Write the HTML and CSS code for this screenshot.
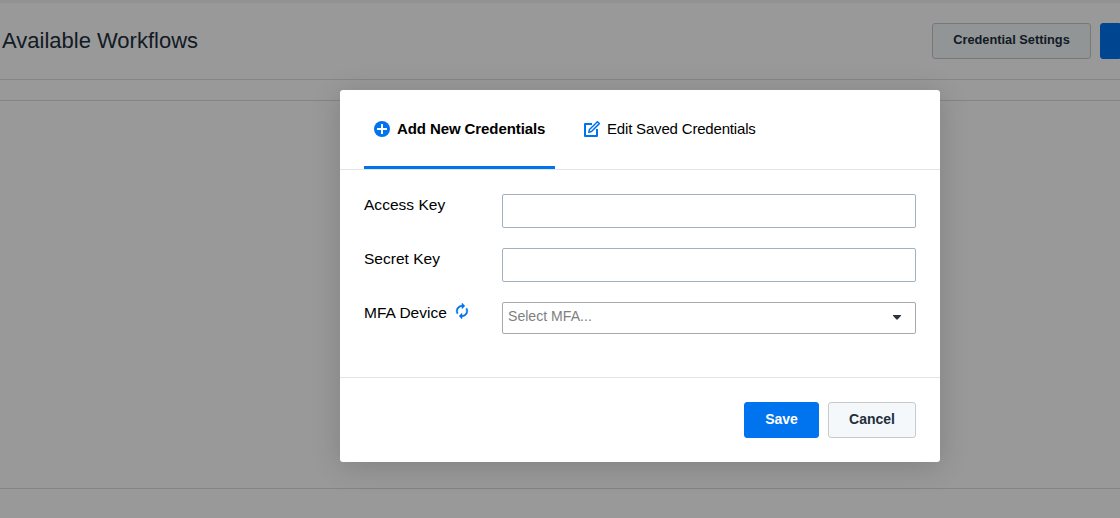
FILE: index.html
```html
<!DOCTYPE html>
<html lang="en">
<head>
<meta charset="utf-8">
<title>Available Workflows</title>
<link rel="stylesheet" href="styles.css">
</head>
<body>
<div class="page">
  <div class="topbar"></div>
  <header class="page-header">
    <h1 class="page-title">Available Workflows</h1>
    <div class="page-actions">
      <button class="btn btn-default btn-settings">Credential Settings</button>
      <button class="btn btn-primary btn-create" aria-label="Create"></button>
    </div>
  </header>
  <div class="toolbar"></div>
  <main class="content"></main>
</div>
<div class="overlay">
  <section class="modal" role="dialog">
    <nav class="tabs">
      <a class="tab tab-active">
        <svg class="tab-icon" viewBox="0 0 16 16"><circle cx="8" cy="8" r="8" fill="#0073ee"/><path d="M8 3v10M3 8h10" stroke="#fff" stroke-width="2"/></svg>
        <span class="tab-text">Add New Credentials</span>
      </a>
      <a class="tab tab-edit">
        <svg class="tab-icon" viewBox="0 0 16 16" fill="none" stroke="#0073ee" stroke-linejoin="round"><path d="M8 3H1v12h12V8" stroke-width="2"/><path d="M4.8 11.2l.7-2.7 7.9-7.8 1.9 1.9-7.8 7.9z" stroke-width="1.5"/></svg>
        <span class="tab-text">Edit Saved Credentials</span>
      </a>
    </nav>
    <form class="form">
      <div class="field">
        <label class="label" for="access">Access Key</label>
        <input class="input" id="access">
      </div>
      <div class="field">
        <label class="label" for="secret">Secret Key</label>
        <input class="input" id="secret">
      </div>
      <div class="field">
        <div class="label">MFA Device<svg class="refresh" viewBox="4 1 16 22"><path fill="#0073ee" stroke="#0073ee" stroke-width=".6" d="M12 6v3l4-4-4-4v3c-4.42 0-8 3.58-8 8 0 1.57.46 3.03 1.24 4.26L6.7 14.8c-.45-.83-.7-1.79-.7-2.8 0-3.31 2.69-6 6-6zm6.76 1.74L17.3 9.2c.44.84.7 1.79.7 2.8 0 3.31-2.69 6-6 6v-3l-4 4 4 4v-3c4.42 0 8-3.58 8-8 0-1.57-.46-3.03-1.24-4.26z"/></svg></div>
        <div class="select"><span class="placeholder">Select MFA...</span><svg class="caret" viewBox="0 0 8 5"><path d="M0 0h8v.8L4.6 4.4H3.4L0 .8z" fill="#2b333b"/></svg></div>
      </div>
    </form>
    <footer class="modal-footer">
      <button class="btn btn-primary btn-save">Save</button>
      <button class="btn btn-default btn-cancel">Cancel</button>
    </footer>
  </section>
</div>
</body>
</html>
```
FILE: styles.css
```css
* { box-sizing: border-box; }

body {
  margin: 0;
  height: 518px;
  overflow: hidden;
  background: #fff;
  color: #000;
  font-family: "Liberation Sans", Arial, sans-serif;
}

.page {
  display: flex;
  flex-direction: column;
  width: 1120px;
  height: 518px;
  color: #212f3c;
}

.topbar { height: 3px; background: #f0f3f6; }

.page-header {
  display: flex;
  justify-content: space-between;
  height: 77px;
  padding: 20px 0 0 2px;
  border-bottom: 1px solid #dcdfe2;
}

.page-title {
  margin: 3px 0 0;
  font-size: 22px;
  line-height: 30px;
  font-weight: 400;
}

.page-actions { display: flex; gap: 9px; }

.toolbar { height: 21px; border-bottom: 1px solid #d8dee4; }

.content { height: 388px; border-bottom: 1px solid #dcdcdc; }

.btn {
  height: 36px;
  padding: 0 0 2px;
  border: 1px solid #c8c9ca;
  border-radius: 3px;
  font: bold 14px "Liberation Sans", Arial, sans-serif;
}

.btn-default { background: #f4f8fb; color: #212f3c; }
.btn-primary { background: #0073ee; border-color: #0073ee; color: #fff; }
.btn-settings { width: 159px; padding-bottom: 3px; font-size: 12.8px; }
.btn-create { width: 20px; border-radius: 3px 0 0 3px; }
.btn-save { width: 75px; }
.btn-cancel { width: 88px; }

.overlay {
  position: absolute;
  inset: 0;
  padding-top: 90px;
  background: rgba(0, 0, 0, 0.4);
}

.modal {
  width: 600px;
  height: 372px;
  margin-left: 340px;
  background: #fff;
  border-radius: 3px;
  box-shadow: 0 4px 30px rgba(0, 0, 0, 0.16);
}

.tabs {
  display: flex;
  gap: 19px;
  height: 80px;
  padding: 0 24px;
  border-bottom: 1px solid #e3e4e5;
  font-size: 15px;
}

.tab {
  display: flex;
  gap: 7px;
  height: 79px;
  padding: 30px 10px 0;
  line-height: 18px;
}

.tab-active {
  width: 191px;
  border-bottom: 3px solid #0073ee;
  font-weight: 700;
  letter-spacing: -0.09px;
}

.tab-edit { letter-spacing: -0.18px; }

.tab-icon { width: 16px; height: 16px; margin-top: 1px; flex: none; }
.tab-text { white-space: nowrap; }

.form {
  display: flex;
  flex-direction: column;
  gap: 20px;
  height: 207px;
  padding: 24px 24px 0;
}

.field { display: flex; }

.label {
  display: flex;
  width: 138px;
  padding-top: 2px;
  font-size: 15.5px;
  line-height: 18px;
  letter-spacing: 0.02px;
}

.refresh { width: 12px; height: 16px; margin: -1px 0 0 9px; overflow: visible; }

.input {
  width: 414px;
  height: 34px;
  border: 1px solid #a3b0c2;
  border-radius: 2px;
  background: #fff;
}

.select {
  display: flex;
  justify-content: space-between;
  width: 414px;
  height: 32px;
  padding: 5px 14px 0 5px;
  border: 1px solid #a9a9a9;
  border-radius: 2px;
  font-size: 14.1px;
  line-height: 17px;
}

.placeholder { color: #7f7f7f; }
.caret { width: 8px; height: 5px; margin-top: 7px; }

.modal-footer {
  display: flex;
  justify-content: flex-end;
  gap: 9px;
  padding: 24px;
  border-top: 1px solid #e3e4e5;
}
```
